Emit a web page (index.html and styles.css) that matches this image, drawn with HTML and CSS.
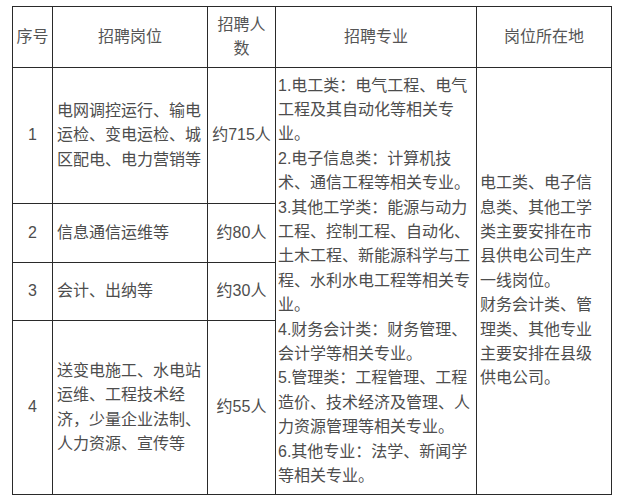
FILE: index.html
```html
<!DOCTYPE html>
<html lang="zh-CN">
<head>
<meta charset="utf-8">
<link rel="stylesheet" href="styles.css">
</head>
<body>
<table class="jobs">
  <colgroup>
    <col class="c-no">
    <col class="c-post">
    <col class="c-num">
    <col class="c-major">
    <col class="c-place">
  </colgroup>
  <tr class="r-head">
    <th>序号</th>
    <th>招聘岗位</th>
    <th>招聘人<br>数</th>
    <th>招聘专业</th>
    <th>岗位所在地</th>
  </tr>
  <tr class="r-1">
    <td class="center">1</td>
    <td class="left">电网调控运行、输电<br>运检、变电运检、城<br>区配电、电力营销等</td>
    <td class="center">约715人</td>
    <td class="major" rowspan="4">1.电工类：电气工程、电气<br>工程及其自动化等相关专<br>业。<br>2.电子信息类：计算机技<br>术、通信工程等相关专业。<br>3.其他工学类：能源与动力<br>工程、控制工程、自动化、<br>土木工程、新能源科学与工<br>程、水利水电工程等相关专<br>业。<br>4.财务会计类：财务管理、<br>会计学等相关专业。<br>5.管理类：工程管理、工程<br>造价、技术经济及管理、人<br>力资源管理等相关专业。<br>6.其他专业：法学、新闻学<br>等相关专业。</td>
    <td class="place" rowspan="4">电工类、电子信<br>息类、其他工学<br>类主要安排在市<br>县供电公司生产<br>一线岗位。<br>财务会计类、管<br>理类、其他专业<br>主要安排在县级<br>供电公司。</td>
  </tr>
  <tr class="r-2">
    <td class="center">2</td>
    <td class="left">信息通信运维等</td>
    <td class="center">约80人</td>
  </tr>
  <tr class="r-3">
    <td class="center">3</td>
    <td class="left">会计、出纳等</td>
    <td class="center">约30人</td>
  </tr>
  <tr class="r-4">
    <td class="center">4</td>
    <td class="left">送变电施工、水电站<br>运维、工程技术经<br>济，少量企业法制、<br>人力资源、宣传等</td>
    <td class="center">约55人</td>
  </tr>
</table>
</body>
</html>
```

FILE: styles.css
```css
html, body {
  margin: 0;
  padding: 0;
  background: #ffffff;
}

body {
  padding: 6px 0 0 12px;
  font-family: "Liberation Sans", "Noto Sans CJK SC", sans-serif;
  font-size: 16px;
  color: #4d4d4d;
}

.jobs {
  border-collapse: collapse;
  table-layout: fixed;
  width: 599px;
}

.c-no { width: 40px; }
.c-post { width: 155px; }
.c-num { width: 68px; }
.c-major { width: 201px; }
.c-place { width: 135px; }

.jobs th,
.jobs td {
  border: 1px solid #2a2a2a;
  padding: 0;
  line-height: 24.4px;
  vertical-align: middle;
  white-space: nowrap;
  overflow: hidden;
}

.jobs th {
  font-weight: normal;
  text-align: center;
  color: #555555;
}

.r-head { height: 61px; }
.r-1 { height: 136px; }
.r-2 { height: 59px; }
.r-3 { height: 58px; }
.r-4 { height: 174px; }

.center {
  text-align: center;
}

.left {
  text-align: left;
  padding-left: 4px !important;
}

.major {
  text-align: left;
  padding-left: 2px !important;
}

.place {
  text-align: left;
  padding-left: 3px !important;
}
```
